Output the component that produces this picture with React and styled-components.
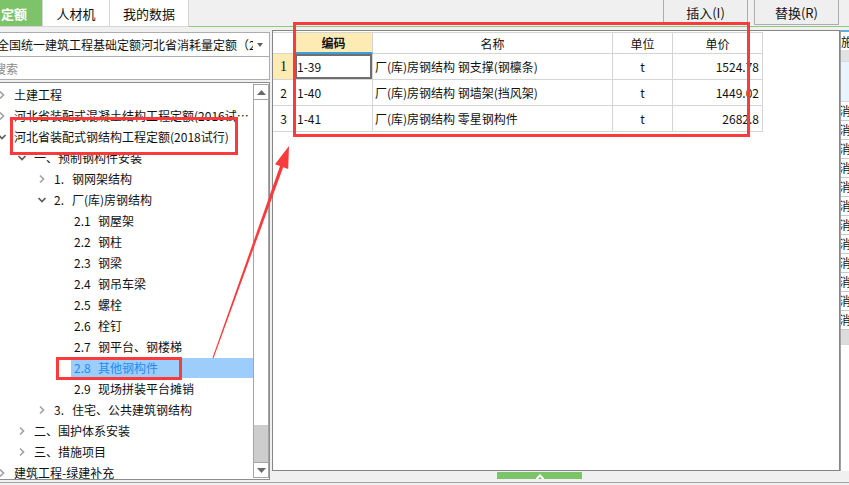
import React from 'react';
import styled, { createGlobalStyle } from 'styled-components';

const GlobalStyle = createGlobalStyle`
  html, body { margin: 0; padding: 0; background: #f0f0f0; }
`;

const Frame = styled.div`
  position: relative;
  width: 849px;
  height: 485px;
  overflow: hidden;
  background: #f0f0f0;
  font-family: "Noto Sans CJK SC", "Noto Sans", sans-serif;
  font-size: 12px;
  color: #111;
  display: flex;
  flex-direction: column;
`;

const TopBar = styled.div`
  display: flex;
  height: 26px;
  flex-shrink: 0;
  border-bottom: 1px solid #8cc97b;
`;

const Tabs = styled.div`
  display: flex;
  background: #fff;
  border-bottom: 1px solid #d6d6d6;
  margin-bottom: -1px;
`;

const Tab = styled.div`
  width: ${p => p.$w}px;
  box-sizing: border-box;
  display: flex;
  align-items: center;
  justify-content: ${p => (p.$active ? 'flex-end' : 'center')};
  padding-right: ${p => (p.$active ? 15 : 0)}px;
  background: ${p => (p.$active ? '#7cc36a' : '#fff')};
  color: ${p => (p.$active ? '#fff' : '#111')};
  font-size: 13px;
  font-weight: ${p => (p.$active ? 700 : 400)};
  border-right: 1px solid #d6d6d6;
`;

const Actions = styled.div`
  margin-left: auto;
  display: flex;
  gap: 6px;
  padding-right: 10px;
  margin-top: -1px;
`;

const Btn = styled.button`
  width: 85px;
  height: 26px;
  padding: 0;
  border: 1px solid #adadad;
  background: #efefef;
  color: #111;
  font-family: inherit;
  font-size: 13px;
`;

const Body = styled.div`
  display: flex;
  flex: 1;
  min-height: 0;
`;

const LeftCol = styled.div`
  width: 270px;
  flex-shrink: 0;
  display: flex;
  flex-direction: column;
  padding-top: 5px;
  overflow: hidden;
`;

const Select = styled.div`
  height: 25px;
  box-sizing: border-box;
  border: 1px solid #abadb3;
  border-left: none;
  background: #fff;
  display: flex;
  align-items: center;
  white-space: nowrap;
  overflow: hidden;
`;

const SelectText = styled.span`
  flex: 1;
  margin-left: -3px;
  overflow: hidden;
`;

const Caret = styled.span`
  width: 0;
  height: 0;
  margin: 0 6px 0 4px;
  border-left: 3px solid transparent;
  border-right: 3px solid transparent;
  border-top: 4px solid #606060;
`;

const Search = styled.div`
  height: 23px;
  box-sizing: border-box;
  border: 1px solid #abadb3;
  border-top: none;
  border-left: none;
  background: #fff;
  color: #8a8a8a;
  display: flex;
  align-items: center;
  text-indent: -6px;
`;

const Tree = styled.div`
  margin-top: 2px;
  height: 398px;
  box-sizing: border-box;
  border: 1px solid #8d8d8d;
  border-left: none;
  background: #fff;
  display: flex;
`;

const TreeList = styled.div`
  flex: 1;
  padding-top: 1px;
  margin-left: -4px;
  overflow: hidden;
`;

const Row = styled.div`
  height: 21px;
  display: flex;
  align-items: center;
  padding-left: ${p => p.$level * 20}px;
  white-space: nowrap;
`;

const Toggle = styled.svg`
  width: 12px;
  height: 12px;
  margin-right: 3px;
  flex-shrink: 0;
`;

const Label = styled.div`
  flex: 1;
  height: 20px;
  line-height: 19px;
  padding-left: 3px;
  background: ${p => (p.$selected ? '#9ccdfb' : 'transparent')};
  color: ${p => (p.$selected ? '#1d8bf5' : '#111')};
`;

const Num = styled.span`
  display: inline-block;
  width: ${p => p.$w}px;
`;

const Scrollbar = styled.div`
  width: 16px;
  flex-shrink: 0;
  display: flex;
  flex-direction: column;
  padding: 1px 0 1px;
`;

const ScrollBtn = styled.div`
  height: 16px;
  box-sizing: border-box;
  border: 1px solid #a5a5a5;
  background: #fff;
  display: flex;
  align-items: center;
  justify-content: center;
`;

const Track = styled.div`
  flex: 1;
  border-left: 1px solid #a5a5a5;
  border-right: 1px solid #a5a5a5;
  background: #fff;
  display: flex;
  flex-direction: column;
  justify-content: flex-end;
`;

const Thumb = styled.div`
  height: 37px;
  background: #cdcdcd;
`;

const RightCol = styled.div`
  flex: 1;
  display: flex;
  flex-direction: column;
  margin-left: 2px;
`;

const Panel = styled.div`
  margin-top: 3px;
  flex: 1;
  border: 1px solid #858585;
  background: #fff;
`;

const Grid = styled.div`
  display: grid;
  grid-template-columns: 22px 78px 240px 60px 90px;
  width: 490px;
  margin-top: 1px;
  border-top: 1px solid #d5d5d5;
`;

const Cell = styled.div`
  height: ${p => (p.$head ? 21 : 26)}px;
  box-sizing: border-box;
  display: flex;
  align-items: center;
  justify-content: ${p => p.$align || 'flex-start'};
  padding: 0 3px 0 ${p => (p.$align === 'flex-start' || !p.$align ? 2 : 3)}px;
  border-right: 1px solid #d5d5d5;
  border-bottom: ${p => (p.$accent ? '2px solid #3c9fdc' : '1px solid #d5d5d5')};
  background: ${p => (p.$yellow ? '#fdebb4' : '#fff')};
  font-weight: ${p => (p.$bold ? 700 : 400)};
  box-shadow: ${p => (p.$active ? 'inset 0 0 0 2px #6f6f6f' : 'none')};
  white-space: nowrap;
  overflow: hidden;
`;

const RowNo = styled.span`
  font-family: ${p => (p.$bold ? '"Liberation Serif", serif' : 'inherit')};
  font-size: ${p => (p.$bold ? 14 : 12)}px;
`;

const HandleBar = styled.div`
  height: 11px;
  flex-shrink: 0;
`;

const Handle = styled.div`
  margin: 1px 0 0 225px;
  width: 85px;
  height: 7px;
  background: #7cc36a;
  display: flex;
  justify-content: center;
  align-items: flex-end;
`;

const Strip = styled.div`
  width: 8px;
  flex-shrink: 0;
  display: flex;
  flex-direction: column;
  margin-top: 3px;
  margin-bottom: 11px;
  border-left: 1px solid #a0a0a0;
  background: #fff;
  overflow: hidden;
`;

const StripHead = styled.div`
  height: 20px;
  line-height: 20px;
  white-space: nowrap;
  border-top: 2px solid #5aaee0;
  box-sizing: border-box;
`;

const StripBand = styled.div`
  height: ${p => p.$h}px;
  background: ${p => p.$bg};
  border-bottom: 1px solid #d8d8d8;
`;

const StripCell = styled.div`
  height: 19px;
  line-height: 18px;
  box-sizing: border-box;
  border-bottom: 1px solid #c8c8c8;
  white-space: nowrap;
  margin-left: -2px;
`;

const Footer = styled.div`
  height: 2px;
  flex-shrink: 0;
  border-top: 1px solid #a3a3a3;
`;

const RedBox = styled.div`
  position: absolute;
  left: ${p => p.$x}px;
  top: ${p => p.$y}px;
  width: ${p => p.$w}px;
  height: ${p => p.$h}px;
  box-sizing: border-box;
  border: 3px solid #fb3b3b;
  pointer-events: none;
`;

const ArrowLayer = styled.svg`
  position: absolute;
  left: 0;
  top: 0;
  pointer-events: none;
`;

const tree = [
  { level: 0, text: '土建工程', toggle: 'right' },
  { level: 0, text: '河北省装配式混凝土结构工程定额(2016试…', toggle: 'right' },
  { level: 0, text: '河北省装配式钢结构工程定额(2018试行)', toggle: 'down' },
  { level: 1, text: '一、预制钢构件安装', toggle: 'down' },
  { level: 2, num: '1.', text: '钢网架结构', toggle: 'right' },
  { level: 2, num: '2.', text: '厂(库)房钢结构', toggle: 'down' },
  { level: 3, num: '2.1', text: '钢屋架' },
  { level: 3, num: '2.2', text: '钢柱' },
  { level: 3, num: '2.3', text: '钢梁' },
  { level: 3, num: '2.4', text: '钢吊车梁' },
  { level: 3, num: '2.5', text: '螺栓' },
  { level: 3, num: '2.6', text: '栓钉' },
  { level: 3, num: '2.7', text: '钢平台、钢楼梯' },
  { level: 3, num: '2.8', text: '其他钢构件', selected: true },
  { level: 3, num: '2.9', text: '现场拼装平台摊销' },
  { level: 2, num: '3.', text: '住宅、公共建筑钢结构', toggle: 'right' },
  { level: 1, text: '二、围护体系安装', toggle: 'right' },
  { level: 1, text: '三、措施项目', toggle: 'right' },
  { level: 0, text: '建筑工程-绿建补充', toggle: 'right' },
];

const rows = [
  { no: '1', code: '1-39', name: '厂(库)房钢结构 钢支撑(钢檩条)', unit: 't', price: '1524.78' },
  { no: '2', code: '1-40', name: '厂(库)房钢结构 钢墙架(挡风架)', unit: 't', price: '1449.02' },
  { no: '3', code: '1-41', name: '厂(库)房钢结构 零星钢构件', unit: 't', price: '2682.8' },
];

function Chevron({ dir }) {
  return (
    <Toggle viewBox="0 0 12 12">
      {dir === 'right' && (
        <polyline points="4,2.5 7.5,6 4,9.5" fill="none" stroke="#a3a3a3" strokeWidth="1.7" />
      )}
      {dir === 'down' && (
        <polyline points="2.5,4 6,7.5 9.5,4" fill="none" stroke="#5c5c5c" strokeWidth="1.7" />
      )}
    </Toggle>
  );
}

function App() {
  return (
    <Frame>
      <GlobalStyle />
      <TopBar>
        <Tabs>
          <Tab $w={43} $active>定额</Tab>
          <Tab $w={67}>人材机</Tab>
          <Tab $w={79}>我的数据</Tab>
        </Tabs>
        <Actions>
          <Btn>插入(I)</Btn>
          <Btn>替换(R)</Btn>
        </Actions>
      </TopBar>

      <Body>
        <LeftCol>
          <Select>
            <SelectText>全国统一建筑工程基础定额河北省消耗量定额（2</SelectText>
            <Caret />
          </Select>
          <Search>搜索</Search>
          <Tree>
            <TreeList>
              {tree.map((n, i) => (
                <Row key={i} $level={n.level}>
                  <Chevron dir={n.toggle} />
                  <Label $selected={n.selected}>
                    {n.num && <Num $w={(n.num.length + 1) * 6}>{n.num}</Num>}
                    {n.text}
                  </Label>
                </Row>
              ))}
            </TreeList>
            <Scrollbar>
              <ScrollBtn>
                <svg width="9" height="5" viewBox="0 0 9 5"><polygon points="0,5 4.5,0 9,5" fill="#6a6a6a" /></svg>
              </ScrollBtn>
              <Track><Thumb /></Track>
              <ScrollBtn>
                <svg width="9" height="5" viewBox="0 0 9 5"><polygon points="0,0 9,0 4.5,5" fill="#6a6a6a" /></svg>
              </ScrollBtn>
            </Scrollbar>
          </Tree>
        </LeftCol>

        <RightCol>
          <Panel>
            <Grid>
              <Cell $head />
              <Cell $head $align="center" $yellow $bold $accent>编码</Cell>
              <Cell $head $align="center">名称</Cell>
              <Cell $head $align="center">单位</Cell>
              <Cell $head $align="center">单价</Cell>
              {rows.map((r, i) => (
                <React.Fragment key={r.no}>
                  <Cell $align="center" $yellow={i === 0}>
                    <RowNo $bold={i === 0}>{r.no}</RowNo>
                  </Cell>
                  <Cell $active={i === 0}>{r.code}</Cell>
                  <Cell>{r.name}</Cell>
                  <Cell $align="center">{r.unit}</Cell>
                  <Cell $align="flex-end">{r.price}</Cell>
                </React.Fragment>
              ))}
            </Grid>
          </Panel>
          <HandleBar>
            <Handle>
              <svg width="10" height="6" viewBox="0 0 10 6">
                <polyline points="1.5,6 5,2.5 8.5,6" fill="none" stroke="#fff" strokeWidth="2" />
              </svg>
            </Handle>
          </HandleBar>
        </RightCol>

        <Strip>
          <StripHead>施</StripHead>
          <StripBand $h={11} $bg="#e2e2e2" />
          <StripBand $h={39} $bg="#e9f5fc" />
          {Array.from({ length: 12 }).map((_, i) => (
            <StripCell key={i}>消</StripCell>
          ))}
          <StripBand $h={14} $bg="#dcdcdc" />
        </Strip>
      </Body>
      <Footer />

      <RedBox $x={293} $y={22} $w={457} $h={115} />
      <RedBox $x={10} $y={117} $w={228} $h={38} />
      <RedBox $x={56} $y={357} $w={126} $h={23} />
      <ArrowLayer width="849" height="485" viewBox="0 0 849 485">
        <polygon
          points="212.5,357.8 280,166.1 275,164.3 289,146 288.2,169.1 283.2,167.3 213.5,358.2"
          fill="#fb3b3b"
        />
      </ArrowLayer>
    </Frame>
  );
}

export default App;
